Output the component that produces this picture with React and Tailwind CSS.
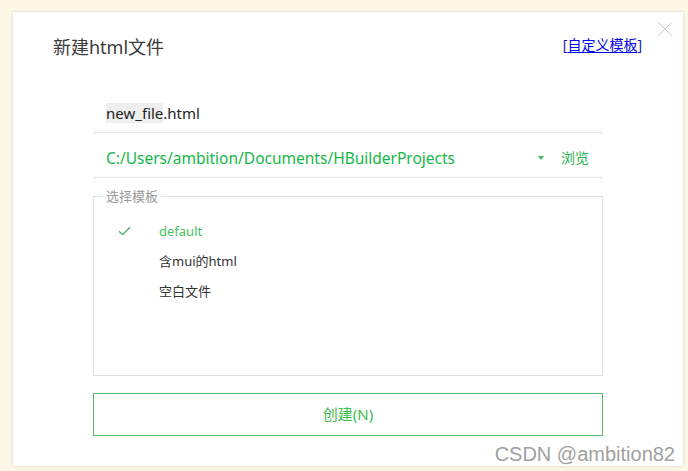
import React from 'react';

const templates = [
    { name: 'default', active: true },
    { name: '含mui的html', active: false },
    { name: '空白文件', active: false }
];

function CheckIcon() {
    return (
        <svg width="13" height="10" viewBox="0 0 13 10" fill="none">
            <path d="M1 5.2 L4.6 8.6 L12 1.2" stroke="#4caf68" strokeWidth="1.3" />
        </svg>
    );
}

export default function App() {
    return (
        <div
            className="w-[688px] h-[471px] bg-[#fdf8e6] pt-[12px] pl-[13px] overflow-hidden"
            style={{ fontFamily: '"Noto Sans", "Noto Sans CJK SC", sans-serif' }}
        >
            <div className="relative w-[670px] h-[454px] bg-white shadow-[0_0_3px_rgba(0,0,0,0.18)]">
                {/* close */}
                <button className="absolute left-[645px] top-[10px] w-[14px] h-[14px]">
                    <svg width="14" height="14" viewBox="0 0 14 14">
                        <path d="M0.5 0.5 L13.5 13.5 M13.5 0.5 L0.5 13.5" stroke="#c8c8c8" strokeWidth="1" />
                    </svg>
                </button>

                {/* header */}
                <div className="flex items-center justify-between pl-[40px] pr-[40px] pt-[22px] h-[48px]">
                    <h1 className="text-[18px] leading-[24px] text-[#3a3a3a] font-normal">新建html文件</h1>
                    <div className="text-[14px] leading-[18px] text-[#1a1aa6] -mt-[4px] mr-[1px]">
                        [<a className="text-[#0000ee] underline underline-offset-2">自定义模板</a>]
                    </div>
                </div>

                <div className="ml-[80px] w-[510px] mt-[36px]">
                    {/* file name */}
                    <div className="h-[37px] border-b border-[#e3e3e3] pl-[13px] flex items-start">
                        <div className="text-[15px] leading-[20px] text-[#222] mt-[7px]">
                            <span className="bg-[#efefef]">new_file</span>.html
                        </div>
                    </div>

                    {/* path */}
                    <div className="h-[45px] border-b border-[#e3e3e3] pl-[13px] flex items-center pt-[6px]">
                        <div className="flex-1 text-[15.5px] leading-[20px] text-[#15b84a]">
                            C:/Users/ambition/Documents/HBuilderProjects
                        </div>
                        <svg width="6" height="4" viewBox="0 0 6 4" className="mr-[17px]">
                            <path d="M0 0 H6 L3 4 Z" fill="#3dbb5b" />
                        </svg>
                        <div className="text-[14px] leading-[20px] text-[#22b14c] mr-[14px]">浏览</div>
                    </div>

                    {/* templates */}
                    <fieldset className="mt-[10px] h-[188px] border border-[#dedede]">
                        <legend className="ml-[9px] px-[3px] text-[13px] leading-[16px] text-[#999]">选择模板</legend>
                        <ul className="mt-[12px] pl-[24px] flex flex-col">
                            {templates.map(t => (
                                <li key={t.name} className="h-[30px] flex items-center">
                                    <div className="w-[41px] flex items-center">
                                        {t.active && <CheckIcon />}
                                    </div>
                                    <span className={`text-[13px] leading-[18px] ${t.active ? 'text-[#47c25f]' : 'text-[#333]'}`}>
                                        {t.name}
                                    </span>
                                </li>
                            ))}
                        </ul>
                    </fieldset>

                    {/* submit */}
                    <button className="mt-[17px] w-full h-[43px] border border-[#55bb66] text-[15px] text-[#3cc04f] flex items-center justify-center">
                        创建(N)
                    </button>
                </div>

                {/* watermark */}
                <div
                    className="absolute right-[8px] bottom-0 text-[20px] leading-[24px] text-[#a0a0a0] [text-shadow:0_0_2px_#fff]"
                    style={{ fontFamily: '"Liberation Sans", sans-serif' }}
                >
                    CSDN @ambition82
                </div>
            </div>
        </div>
    );
}
